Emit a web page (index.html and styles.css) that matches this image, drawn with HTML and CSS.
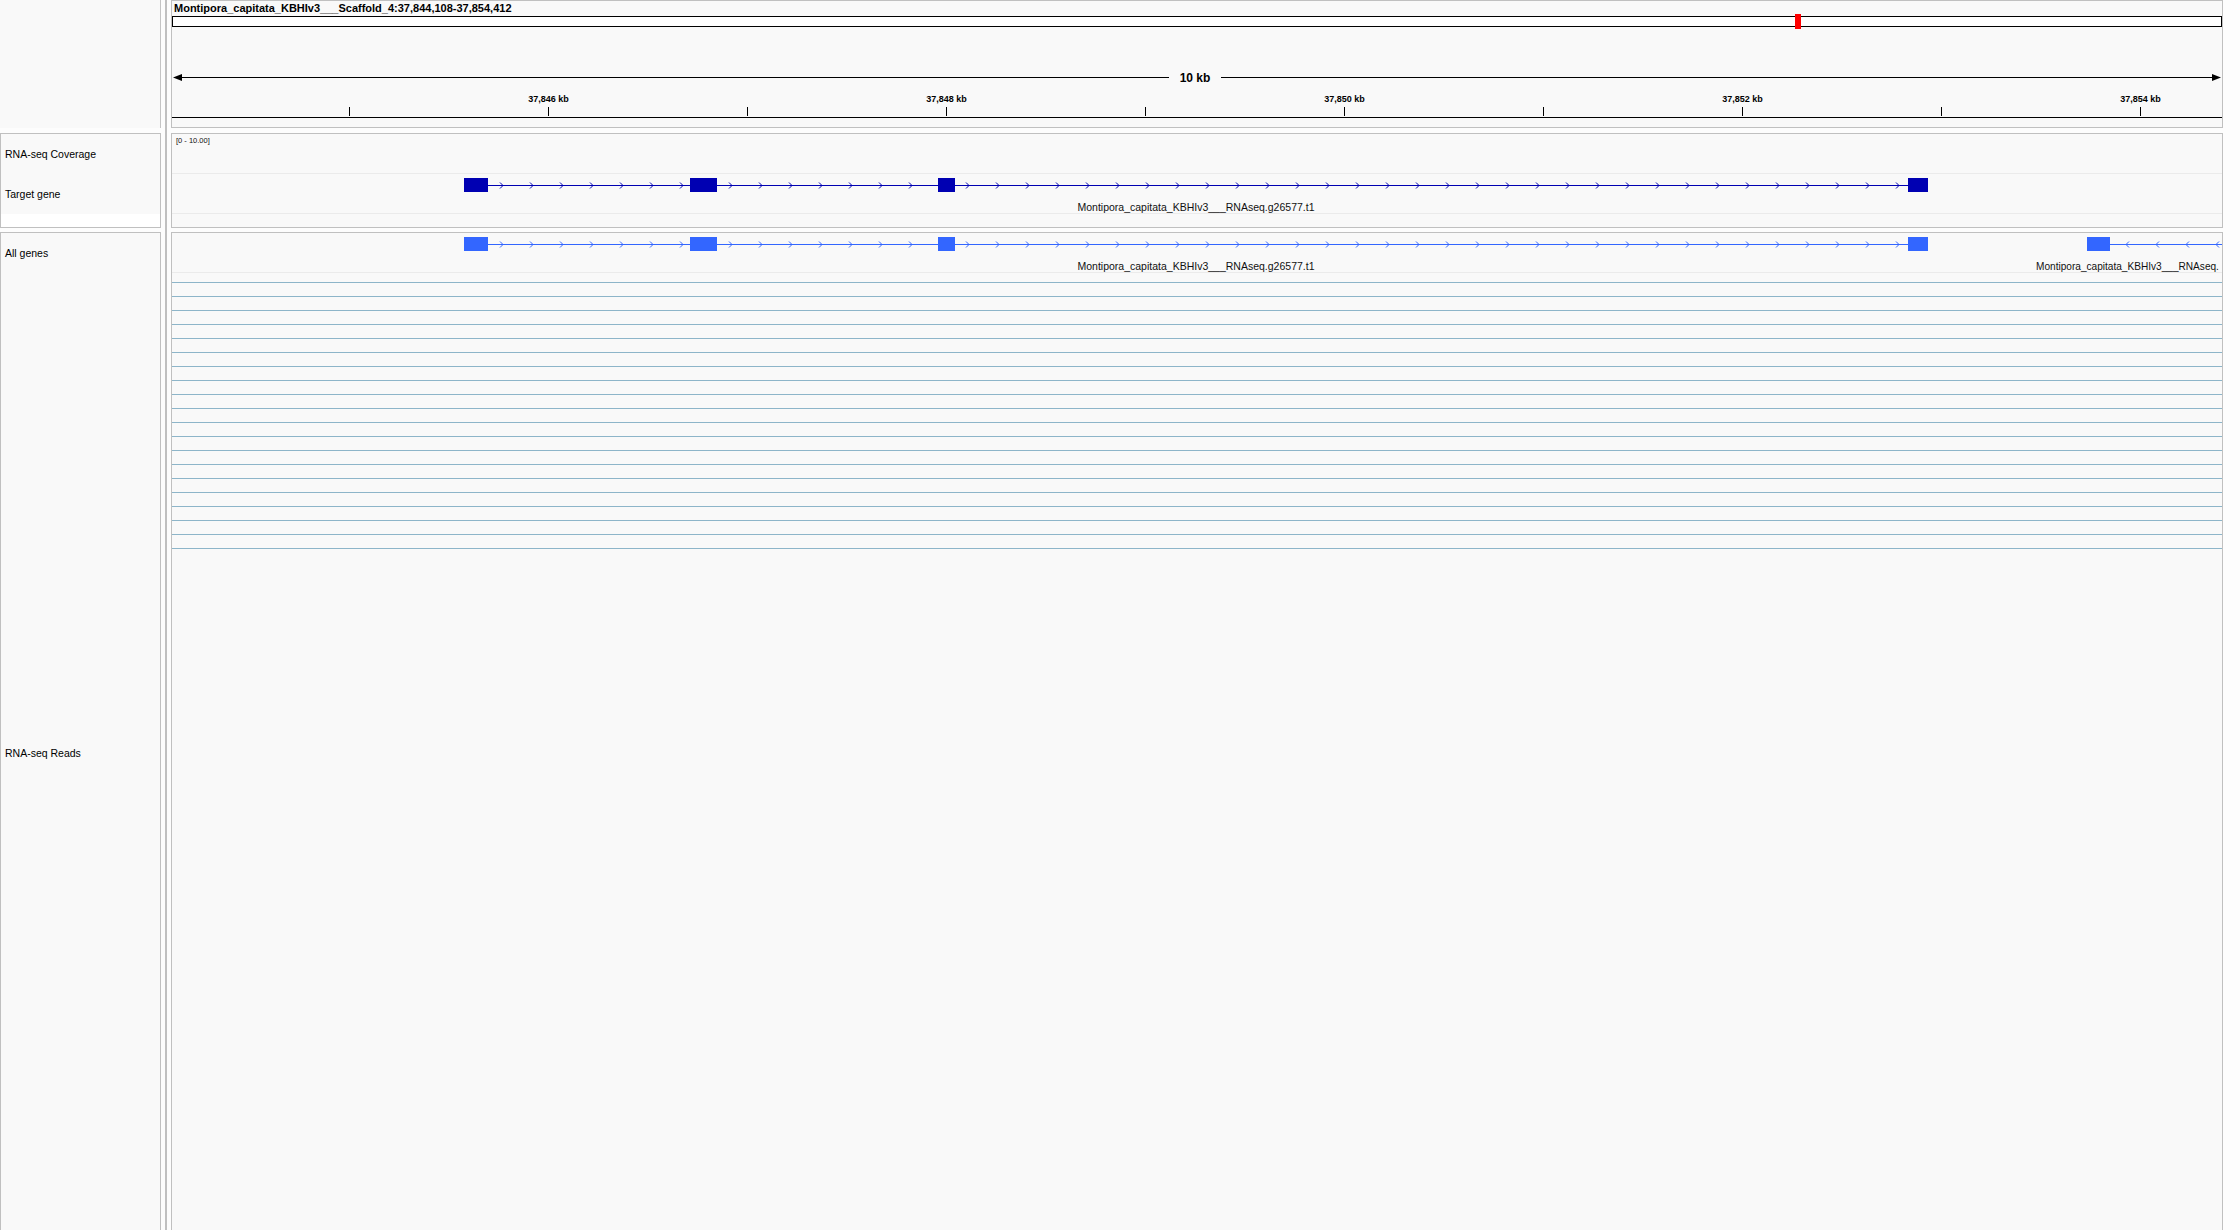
FILE: index.html
```html
<!DOCTYPE html>
<html>
<head>
<meta charset="utf-8">
<title>IGV</title>
<link rel="stylesheet" href="styles.css">
</head>
<body>
<div class="igv">
  <div class="name-head"></div>
  <div class="divider"></div>
  <div class="data-head">
    <div class="locus">Montipora_capitata_KBHIv3___Scaffold_4:37,844,108-37,854,412</div>
    <div class="ideogram"><span class="ideo-mark"></span></div>
    <svg class="ruler" width="2050" height="100" viewBox="0 0 2050 100">
      <path class="rl" d="M10 50.5H997M1049 50.5H2040"/>
      <polygon class="ra" points="1,50.5 10,47 10,54"/>
      <polygon class="ra" points="2049,50.5 2040,47 2040,54"/>
      <text class="span" x="1023" y="54.5">10 kb</text>
      <path class="rl" d="M177.5 80V89M376.5 80V89M575.5 80V89M774.5 80V89M973.5 80V89M1172.5 80V89M1371.5 80V89M1570.5 80V89M1769.5 80V89M1968.5 80V89"/>
      <text class="tick" x="376.5" y="74.5">37,846 kb</text>
      <text class="tick" x="774.5" y="74.5">37,848 kb</text>
      <text class="tick" x="1172.5" y="74.5">37,850 kb</text>
      <text class="tick" x="1570.5" y="74.5">37,852 kb</text>
      <text class="tick" x="1968.5" y="74.5">37,854 kb</text>
      <path class="rl" d="M0 90.5H2050"/>
    </svg>
  </div>

  <div class="name-panel np2">
    <div class="name-row">RNA-seq Coverage</div>
    <div class="name-row">Target gene</div>
    <div class="name-blank"></div>
  </div>
  <div class="data-panel dp2">
    <div class="track cov"><span class="range">[0 - 10.00]</span></div>
    <div class="track">
      <svg class="gene-svg tg" width="2050" height="39" viewBox="0 0 2050 39">
        <path class="intron" d="M316 11.5H1736"/>
        <path class="chev" d="M328 8.5l3 3l-3 3m30-6l3 3l-3 3m30-6l3 3l-3 3m30-6l3 3l-3 3m30-6l3 3l-3 3m30-6l3 3l-3 3m30-6l3 3l-3 3"/>
        <path class="chev" d="M557 8.5l3 3l-3 3m30-6l3 3l-3 3m30-6l3 3l-3 3m30-6l3 3l-3 3m30-6l3 3l-3 3m30-6l3 3l-3 3m30-6l3 3l-3 3"/>
        <path class="chev" d="M794 8.5l3 3l-3 3m30-6l3 3l-3 3m30-6l3 3l-3 3m30-6l3 3l-3 3m30-6l3 3l-3 3m30-6l3 3l-3 3m30-6l3 3l-3 3m30-6l3 3l-3 3m30-6l3 3l-3 3m30-6l3 3l-3 3m30-6l3 3l-3 3m30-6l3 3l-3 3m30-6l3 3l-3 3m30-6l3 3l-3 3m30-6l3 3l-3 3m30-6l3 3l-3 3m30-6l3 3l-3 3m30-6l3 3l-3 3m30-6l3 3l-3 3m30-6l3 3l-3 3m30-6l3 3l-3 3m30-6l3 3l-3 3m30-6l3 3l-3 3m30-6l3 3l-3 3m30-6l3 3l-3 3m30-6l3 3l-3 3m30-6l3 3l-3 3m30-6l3 3l-3 3m30-6l3 3l-3 3m30-6l3 3l-3 3m30-6l3 3l-3 3m30-6l3 3l-3 3"/>
        <rect class="exon" x="292" y="4" width="24" height="14"/>
        <rect class="exon" x="518" y="4" width="27" height="14"/>
        <rect class="exon" x="766" y="4" width="17" height="14"/>
        <rect class="exon" x="1736" y="4" width="20" height="14"/>
        <text class="glabel" x="1024" y="36.5">Montipora_capitata_KBHIv3___RNAseq.g26577.t1</text>
      </svg>
    </div>
    <div class="track-blank"></div>
  </div>

  <div class="name-panel np3">
    <div class="name-row">All genes</div>
    <div class="name-row reads-name">RNA-seq Reads</div>
  </div>
  <div class="data-panel dp3">
    <div class="track">
      <svg class="gene-svg ag" width="2050" height="39" viewBox="0 0 2050 39">
        <path class="intron" d="M316 11.5H1736"/>
        <path class="chev" d="M328 8.5l3 3l-3 3m30-6l3 3l-3 3m30-6l3 3l-3 3m30-6l3 3l-3 3m30-6l3 3l-3 3m30-6l3 3l-3 3m30-6l3 3l-3 3"/>
        <path class="chev" d="M557 8.5l3 3l-3 3m30-6l3 3l-3 3m30-6l3 3l-3 3m30-6l3 3l-3 3m30-6l3 3l-3 3m30-6l3 3l-3 3m30-6l3 3l-3 3"/>
        <path class="chev" d="M794 8.5l3 3l-3 3m30-6l3 3l-3 3m30-6l3 3l-3 3m30-6l3 3l-3 3m30-6l3 3l-3 3m30-6l3 3l-3 3m30-6l3 3l-3 3m30-6l3 3l-3 3m30-6l3 3l-3 3m30-6l3 3l-3 3m30-6l3 3l-3 3m30-6l3 3l-3 3m30-6l3 3l-3 3m30-6l3 3l-3 3m30-6l3 3l-3 3m30-6l3 3l-3 3m30-6l3 3l-3 3m30-6l3 3l-3 3m30-6l3 3l-3 3m30-6l3 3l-3 3m30-6l3 3l-3 3m30-6l3 3l-3 3m30-6l3 3l-3 3m30-6l3 3l-3 3m30-6l3 3l-3 3m30-6l3 3l-3 3m30-6l3 3l-3 3m30-6l3 3l-3 3m30-6l3 3l-3 3m30-6l3 3l-3 3m30-6l3 3l-3 3m30-6l3 3l-3 3"/>
        <rect class="exon" x="292" y="4" width="24" height="14"/>
        <rect class="exon" x="518" y="4" width="27" height="14"/>
        <rect class="exon" x="766" y="4" width="17" height="14"/>
        <rect class="exon" x="1736" y="4" width="20" height="14"/>
        <text class="glabel" x="1024" y="36.5">Montipora_capitata_KBHIv3___RNAseq.g26577.t1</text>
        <path class="intron" d="M1938 11.5H2050"/>
        <path class="chev" d="M1957 8.5l-3 3l3 3m30-6l-3 3l3 3m30-6l-3 3l3 3m30-6l-3 3l3 3"/>
        <rect class="exon" x="1915" y="4" width="23" height="14"/>
        <text class="glabel start" x="1864" y="36.5">Montipora_capitata_KBHIv3___RNAseq.</text>
      </svg>
    </div>
    <div class="reads">
      <div class="read-row"></div><div class="read-row"></div><div class="read-row"></div><div class="read-row"></div><div class="read-row"></div>
      <div class="read-row"></div><div class="read-row"></div><div class="read-row"></div><div class="read-row"></div><div class="read-row"></div>
      <div class="read-row"></div><div class="read-row"></div><div class="read-row"></div><div class="read-row"></div><div class="read-row"></div>
      <div class="read-row"></div><div class="read-row"></div><div class="read-row"></div><div class="read-row"></div><div class="read-row"></div>
    </div>
  </div>
</div>
</body>
</html>
```

FILE: styles.css
```css
* { box-sizing: border-box; }

html, body {
  margin: 0;
  padding: 0;
}

body {
  width: 2240px;
  height: 1230px;
  overflow: hidden;
  background: #fdfdfd;
  font-family: "Liberation Sans", Arial, sans-serif;
  color: #000;
}

.igv {
  display: grid;
  grid-template-columns: 161px 2px 2052px;
  grid-template-rows: 128px auto 1fr;
  column-gap: 4px;
  height: 1230px;
  overflow: hidden;
  align-items: start;
}

.name-head {
  grid-column: 1;
  grid-row: 1;
  height: 128px;
  background: #f9f9f9;
  border-right: 1px solid #c4c4c4;
}

.divider {
  grid-column: 2;
  grid-row: 1 / 4;
  align-self: stretch;
  background: #c0c0c0;
}

.data-head {
  grid-column: 3;
  grid-row: 1;
  height: 128px;
  background: #f9f9f9;
  border: 1px solid #c0c0c0;
}

.locus {
  height: 15px;
  line-height: 15px;
  padding-left: 2px;
  font-size: 11px;
  font-weight: bold;
  white-space: nowrap;
}

.ideogram {
  position: relative;
  height: 11px;
  border: 1px solid #000;
  background: #fff;
}

.ideo-mark {
  position: absolute;
  left: 1622px;
  top: -3px;
  width: 6px;
  height: 15px;
  background: #ff0000;
}

.ruler { display: block; }

.rl { stroke: #000; stroke-width: 1; fill: none; }
.ra { fill: #000; }

.ruler text {
  font-family: "Liberation Sans", Arial, sans-serif;
  font-weight: bold;
  text-anchor: middle;
  fill: #000;
}
.ruler .span { font-size: 12px; }
.ruler .tick { font-size: 9px; }

.name-panel {
  grid-column: 1;
  background: #fff;
  border: 1px solid #c0c0c0;
}

.np2 { grid-row: 2; margin-top: 5px; height: 95px; }
.np3 { grid-row: 3; margin-top: 4px; height: 1010px; border-bottom: none; }

.name-row {
  height: 40px;
  display: flex;
  align-items: center;
  padding-left: 4px;
  font-size: 10.5px;
  background: #f9f9f9;
  white-space: nowrap;
}

.name-blank { height: 13px; background: #fff; }

.reads-name { height: 960px; }

.data-panel {
  grid-column: 3;
  background: #f9f9f9;
  border: 1px solid #c0c0c0;
  overflow: hidden;
}

.dp2 { grid-row: 2; margin-top: 5px; height: 95px; }
.dp3 { grid-row: 3; margin-top: 4px; height: 1010px; border-bottom: none; }

.track {
  height: 40px;
  border-bottom: 1px solid #ebebeb;
  position: relative;
}

.cov {
  padding: 2px 0 0 4px;
}

.range {
  display: block;
  font-size: 7.5px;
  line-height: 9px;
  color: #111;
}

.track-blank { height: 13px; }

.gene-svg { display: block; overflow: hidden; }

.glabel {
  font-family: "Liberation Sans", Arial, sans-serif;
  font-size: 10.5px;
  text-anchor: middle;
  fill: #111;
}
.glabel.start { text-anchor: start; font-size: 10.1px; }

.tg .intron, .tg .chev { stroke: #0000b2; stroke-width: 1; fill: none; }
.tg .exon { fill: #0000b2; }

.ag .intron, .ag .chev { stroke: #3366ff; stroke-width: 1; fill: none; }
.ag .exon { fill: #3366ff; }

.reads { padding-top: 9px; }

.read-row {
  height: 14px;
  border-top: 1px solid #8db5c9;
}
```
